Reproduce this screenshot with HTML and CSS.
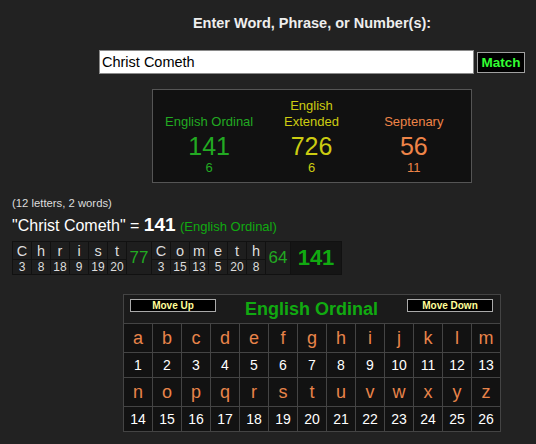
FILE: index.html
```html
<!DOCTYPE html>
<html>
<head>
<meta charset="utf-8">
<link rel="stylesheet" href="styles.css">
</head>
<body>
<div class="top">
  <div class="title">Enter Word, Phrase, or Number(s):</div>
  <div class="entry">
    <input class="field" type="text" value="Christ Cometh">
    <button class="match">Match</button>
  </div>
  <div class="results">
    <div class="col ord"><div class="lbl">English Ordinal</div><div class="num">141</div><div class="sub">6</div></div>
    <div class="col ext"><div class="lbl">English<br>Extended</div><div class="num">726</div><div class="sub">6</div></div>
    <div class="col sep"><div class="lbl">Septenary</div><div class="num">56</div><div class="sub">11</div></div>
  </div>
</div>

<div class="info">(12 letters, 2 words)</div>
<div class="quote">"Christ Cometh" = <b>141</b> <span class="sys">(English Ordinal)</span></div>

<div class="breakdown">
  <div class="lc"><span class="l">C</span><span class="n">3</span></div>
  <div class="lc"><span class="l">h</span><span class="n">8</span></div>
  <div class="lc"><span class="l">r</span><span class="n">18</span></div>
  <div class="lc"><span class="l">i</span><span class="n">9</span></div>
  <div class="lc"><span class="l">s</span><span class="n">19</span></div>
  <div class="lc"><span class="l">t</span><span class="n">20</span></div>
  <div class="wsum">77</div>
  <div class="lc"><span class="l">C</span><span class="n">3</span></div>
  <div class="lc"><span class="l">o</span><span class="n">15</span></div>
  <div class="lc"><span class="l">m</span><span class="n">13</span></div>
  <div class="lc"><span class="l">e</span><span class="n">5</span></div>
  <div class="lc"><span class="l">t</span><span class="n">20</span></div>
  <div class="lc"><span class="l">h</span><span class="n">8</span></div>
  <div class="wsum">64</div>
  <div class="total">141</div>
</div>

<div class="chart">
  <div class="chart-head">
    <div class="btn">Move Up</div>
    <div class="chart-title">English Ordinal</div>
    <div class="btn">Move Down</div>
  </div>
  <div class="grid">
    <div class="cell ch">a</div><div class="cell ch">b</div><div class="cell ch">c</div><div class="cell ch">d</div><div class="cell ch">e</div><div class="cell ch">f</div><div class="cell ch">g</div><div class="cell ch">h</div><div class="cell ch">i</div><div class="cell ch">j</div><div class="cell ch">k</div><div class="cell ch">l</div><div class="cell ch">m</div>
    <div class="cell nv">1</div><div class="cell nv">2</div><div class="cell nv">3</div><div class="cell nv">4</div><div class="cell nv">5</div><div class="cell nv">6</div><div class="cell nv">7</div><div class="cell nv">8</div><div class="cell nv">9</div><div class="cell nv">10</div><div class="cell nv">11</div><div class="cell nv">12</div><div class="cell nv">13</div>
    <div class="cell ch">n</div><div class="cell ch">o</div><div class="cell ch">p</div><div class="cell ch">q</div><div class="cell ch">r</div><div class="cell ch">s</div><div class="cell ch">t</div><div class="cell ch">u</div><div class="cell ch">v</div><div class="cell ch">w</div><div class="cell ch">x</div><div class="cell ch">y</div><div class="cell ch">z</div>
    <div class="cell nv">14</div><div class="cell nv">15</div><div class="cell nv">16</div><div class="cell nv">17</div><div class="cell nv">18</div><div class="cell nv">19</div><div class="cell nv">20</div><div class="cell nv">21</div><div class="cell nv">22</div><div class="cell nv">23</div><div class="cell nv">24</div><div class="cell nv">25</div><div class="cell nv">26</div>
  </div>
</div>
</body>
</html>
```
FILE: styles.css
```css
html, body {
  margin: 0;
  background: #222222;
}
body {
  font-family: "Liberation Sans", Arial, sans-serif;
  color: #dddddd;
  width: 536px;
  height: 444px;
  overflow: hidden;
}
.top {
  width: 448px;
  margin-left: 88px;
  display: flex;
  flex-direction: column;
  align-items: center;
}
.title {
  margin-top: 14px;
  font-weight: bold;
  font-size: 14.5px;
  line-height: 18px;
  color: #eeeeee;
}
.entry {
  margin-top: 18px;
  display: flex;
  align-items: center;
  gap: 3px;
}
.field {
  width: 375px;
  height: 24px;
  box-sizing: border-box;
  margin: 0;
  border: 1px solid #8a8a8a;
  padding: 0 2px;
  background: #ffffff;
  color: #000000;
  font-family: "Liberation Sans", Arial, sans-serif;
  font-size: 14.5px;
  outline: none;
}
.match {
  width: 48px;
  height: 21px;
  box-sizing: border-box;
  margin: 1px 0 0 0;
  padding: 0;
  background: #000000;
  border: 1px solid #a0a0a0;
  color: #33ff33;
  font-family: "Liberation Sans", Arial, sans-serif;
  font-weight: bold;
  font-size: 13.5px;
}
.results {
  margin-top: 15px;
  width: 320px;
  box-sizing: border-box;
  border: 1px solid #555555;
  background: #111111;
  padding: 8px 6px 6px 5px;
  display: flex;
}
.col {
  width: 103px;
  text-align: center;
}
.lbl {
  height: 32px;
  display: flex;
  align-items: flex-end;
  justify-content: center;
  font-size: 13px;
  line-height: 16px;
}
.num {
  margin-top: 2px;
  font-size: 25px;
  line-height: 28px;
}
.sub {
  font-size: 13px;
  line-height: 16px;
}
.ord { color: #22aa22; }
.ext { color: #cccc11; }
.sep { color: #ee8448; }

.info {
  margin: 13px 0 0 12px;
  font-size: 11.3px;
  line-height: 14px;
  color: #dddddd;
}
.quote {
  margin: 4px 0 0 12px;
  font-size: 16px;
  line-height: 22px;
  color: #ffffff;
}
.quote b {
  font-size: 19px;
}
.quote .sys {
  font-size: 13px;
  color: #11aa11;
}
.breakdown {
  margin: 3px 0 0 12px;
  display: inline-flex;
  gap: 1px;
  padding: 1px;
  background: #111111;
  vertical-align: top;
}
.lc {
  display: flex;
  flex-direction: column;
  gap: 1px;
  width: 18px;
}
.lc span {
  display: block;
  background: #1e1e1e;
  text-align: center;
  color: #dddddd;
}
.lc .l {
  height: 17px;
  line-height: 18px;
  font-size: 14.5px;
}
.lc .n {
  height: 14px;
  line-height: 14px;
  font-size: 12px;
}
.wsum {
  width: 24px;
  background: #1e1e1e;
  color: #22aa22;
  font-size: 17px;
  display: flex;
  align-items: center;
  justify-content: center;
}
.total {
  width: 50px;
  background: #151515;
  color: #11aa11;
  font-weight: bold;
  font-size: 22px;
  display: flex;
  align-items: center;
  justify-content: center;
}
.chart {
  margin: 19px 0 0 123px;
  width: 378px;
  box-sizing: border-box;
  border: 1px solid #444444;
  background: #444444;
}
.chart-head {
  height: 28px;
  box-sizing: border-box;
  background: #1b1b1b;
  display: flex;
  align-items: flex-start;
  justify-content: space-between;
  padding: 4px 7px 0 6px;
}
.btn {
  width: 86px;
  height: 13px;
  box-sizing: border-box;
  background: #000000;
  border: 1px solid #aaaaaa;
  color: #ffff99;
  font-weight: bold;
  font-size: 10px;
  line-height: 11px;
  text-align: center;
}
.chart-title {
  color: #11aa11;
  font-weight: bold;
  font-size: 18px;
  line-height: 20px;
}
.grid {
  margin-top: 1px;
  display: grid;
  grid-template-columns: repeat(13, 28px);
  grid-template-rows: 28px 24px 28px 24px;
  gap: 1px;
}
.cell {
  background: #121212;
  display: flex;
  align-items: center;
  justify-content: center;
}
.cell.ch {
  color: #e8844a;
  font-size: 18px;
}
.cell.nv {
  color: #ffffff;
  font-size: 14px;
}
```
